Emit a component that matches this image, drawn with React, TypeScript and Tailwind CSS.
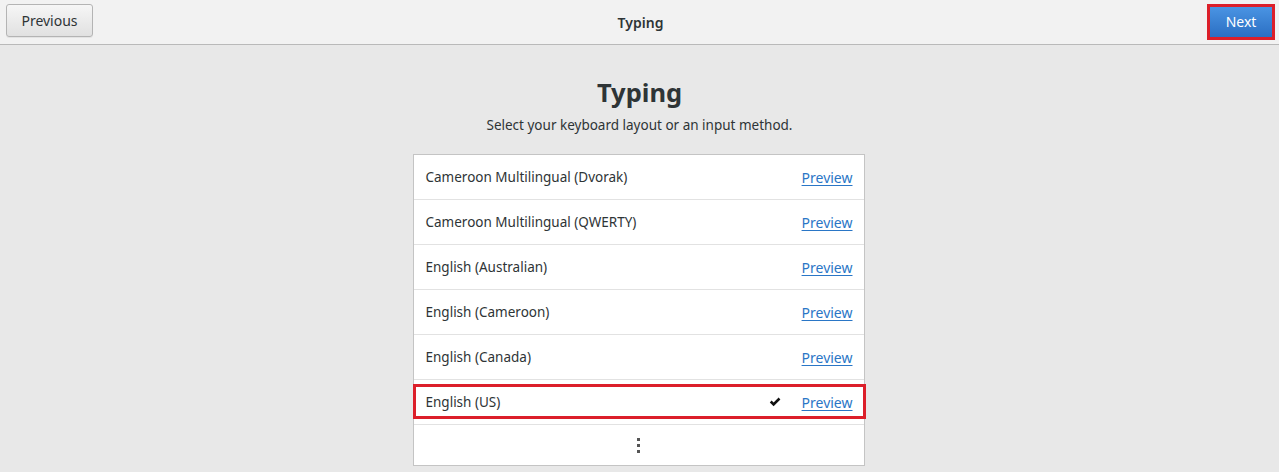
import React from "react";

const layouts = [
  { name: "Cameroon Multilingual (Dvorak)", selected: false },
  { name: "Cameroon Multilingual (QWERTY)", selected: false },
  { name: "English (Australian)", selected: false },
  { name: "English (Cameroon)", selected: false },
  { name: "English (Canada)", selected: false },
  { name: "English (US)", selected: true },
];

function Check() {
  return (
    <svg width="12" height="10" viewBox="0 0 12 10" className="mr-[21px]">
      <path d="M0.8 5.4 L2.6 3.6 L4.6 5.6 L9.6 0.6 L11.4 2.4 L4.6 9.2 Z" fill="#111" />
    </svg>
  );
}

function LayoutRow({ name, selected }: { name: string; selected: boolean }) {
  return (
    <div className="relative flex h-[45px] items-center border-b border-[#e2e2e2] pl-[12px] pr-[11px]">
      <span className="flex-1 text-[13.5px] text-[#2e3436]">{name}</span>
      {selected && <Check />}
      <a className="cursor-pointer text-[14px] text-[#2a76c6] underline underline-offset-2">Preview</a>
      {selected && (
        <div className="pointer-events-none absolute -left-[1px] -right-[2px] top-[4px] bottom-[5px] border-[3px] border-[#dc1f2a]" />
      )}
    </div>
  );
}

export default function App() {
  return (
    <div
      className="h-[472px] w-full overflow-hidden bg-[#e8e8e8]"
      style={{ fontFamily: '"Noto Sans", "Open Sans", sans-serif' }}
    >
      {/* header bar */}
      <div className="grid h-[45px] grid-cols-[1fr_auto_1fr] items-center border-b border-[#b9b9b9] bg-[#f2f2f2] pl-[6px] pr-[4px]">
        <div>
          <button className="mb-[3px] h-[33px] w-[87px] rounded-[3px] border border-[#b4b4b4] bg-gradient-to-b from-[#f6f6f6] to-[#e1e1e1] text-[14px] text-[#2e3436] shadow-[0_1px_0_rgba(0,0,0,0.06)]">
            Previous
          </button>
        </div>
        <div className="text-[14px] font-semibold text-[#2e3436]">Typing</div>
        <div className="flex justify-end">
          <div className="mb-[1px] border-[3px] border-[#dc1f2a]">
            <button className="block h-[30px] w-[62px] bg-gradient-to-b from-[#4a94e3] to-[#2b6fc3] text-[14px] text-white">
              Next
            </button>
          </div>
        </div>
      </div>

      {/* body */}
      <div className="flex flex-col items-center">
        <h1 className="mt-[29px] text-[25.5px] font-bold leading-[36px] text-[#2e3436]">Typing</h1>
        <p className="mt-[5px] text-[13.5px] text-[#2e3436]">Select your keyboard layout or an input method.</p>

        <div className="mt-[19px] w-[452px] -translate-x-[1px] border border-[#c4c4c4] bg-white">
          {layouts.map((l) => (
            <LayoutRow key={l.name} name={l.name} selected={l.selected} />
          ))}
          <div className="flex h-[40px] flex-col items-center justify-center gap-[3px]">
            <span className="h-[3px] w-[3px] bg-[#555]" />
            <span className="h-[3px] w-[3px] bg-[#555]" />
            <span className="h-[3px] w-[3px] bg-[#555]" />
          </div>
        </div>
      </div>
    </div>
  );
}
